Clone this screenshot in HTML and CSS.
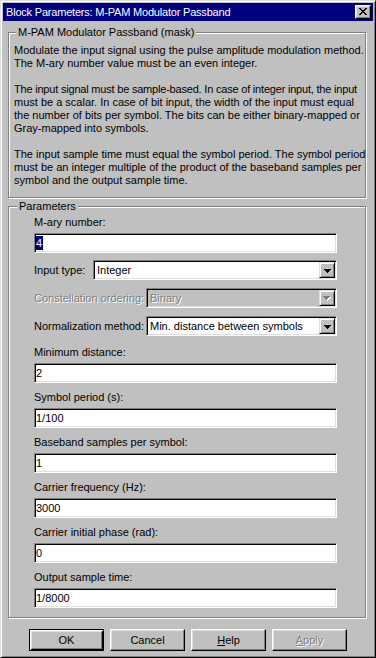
FILE: index.html
```html
<!DOCTYPE html>
<html lang="en">
<head>
    <meta charset="UTF-8">
    <meta name="viewport" content="width=device-width, initial-scale=1.0">
    <title>Block Parameters: M-PAM Modulator Passband</title>
    <link rel="stylesheet" href="styles.css">
</head>
<body>
    <div class="window">
        <!-- Caption -->
        <div class="titlebar">
            <span class="title">Block Parameters: M-PAM Modulator Passband</span>
            <span class="close-btn">
                <svg width="8" height="7" viewBox="0 0 8 7" shape-rendering="crispEdges">
                    <rect x="0" y="0" width="2" height="1"/><rect x="6" y="0" width="2" height="1"/>
                    <rect x="1" y="1" width="2" height="1"/><rect x="5" y="1" width="2" height="1"/>
                    <rect x="2" y="2" width="4" height="1"/>
                    <rect x="3" y="3" width="2" height="1"/>
                    <rect x="2" y="4" width="4" height="1"/>
                    <rect x="1" y="5" width="2" height="1"/><rect x="5" y="5" width="2" height="1"/>
                    <rect x="0" y="6" width="2" height="1"/><rect x="6" y="6" width="2" height="1"/>
                </svg>
            </span>
        </div>

        <div class="dialog">
            <!-- Mask description -->
            <fieldset class="group group-desc">
                <legend>M-PAM Modulator Passband (mask)</legend>
                <p class="desc">Modulate the input signal using the pulse amplitude modulation method.<br>The M-ary number value must be an even integer.</p>
                <p class="desc"><span class="tight">The input signal must be sample-based. In case of integer input, the input</span><br>must be a scalar. In case of bit input, the width of the input must equal<br>the number of bits per symbol. The bits can be either binary-mapped or<br>Gray-mapped into symbols.</p>
                <p class="desc">The input sample time must equal the symbol period. The symbol period<br>must be an integer multiple of the product of the baseband samples per<br>symbol and the output sample time.</p>
            </fieldset>

            <!-- Parameters -->
            <fieldset class="group group-params">
                <legend>Parameters</legend>

                <div class="field field-first">
                    <div class="field-label">M-ary number:</div>
                    <div class="edit"><span class="selected">4</span></div>
                </div>

                <div class="combo-row">
                    <span class="combo-label label-short">Input type:</span>
                    <div class="combo">
                        <span class="combo-text">Integer</span>
                        <span class="drop-btn"><svg width="7" height="4" viewBox="0 0 7 4" shape-rendering="crispEdges"><rect x="0" y="0" width="7" height="1"/><rect x="1" y="1" width="5" height="1"/><rect x="2" y="2" width="3" height="1"/><rect x="3" y="3" width="1" height="1"/></svg></span>
                    </div>
                </div>

                <div class="combo-row">
                    <span class="combo-label label-long disabled">Constellation ordering:</span>
                    <div class="combo combo-disabled">
                        <span class="combo-text disabled-text">Binary</span>
                        <span class="drop-btn"><svg width="8" height="5" viewBox="0 0 8 5" shape-rendering="crispEdges"><g fill="#fff"><rect x="1" y="1" width="7" height="1"/><rect x="2" y="2" width="5" height="1"/><rect x="3" y="3" width="3" height="1"/><rect x="4" y="4" width="1" height="1"/></g><g fill="#808080"><rect x="0" y="0" width="7" height="1"/><rect x="1" y="1" width="5" height="1"/><rect x="2" y="2" width="3" height="1"/><rect x="3" y="3" width="1" height="1"/></g></svg></span>
                    </div>
                </div>

                <div class="combo-row combo-row-last">
                    <span class="combo-label label-long">Normalization method:</span>
                    <div class="combo">
                        <span class="combo-text">Min. distance between symbols</span>
                        <span class="drop-btn"><svg width="7" height="4" viewBox="0 0 7 4" shape-rendering="crispEdges"><rect x="0" y="0" width="7" height="1"/><rect x="1" y="1" width="5" height="1"/><rect x="2" y="2" width="3" height="1"/><rect x="3" y="3" width="1" height="1"/></svg></span>
                    </div>
                </div>

                <div class="field">
                    <div class="field-label">Minimum distance:</div>
                    <div class="edit">2</div>
                </div>

                <div class="field">
                    <div class="field-label">Symbol period (s):</div>
                    <div class="edit">1/100</div>
                </div>

                <div class="field">
                    <div class="field-label">Baseband samples per symbol:</div>
                    <div class="edit">1</div>
                </div>

                <div class="field">
                    <div class="field-label">Carrier frequency (Hz):</div>
                    <div class="edit">3000</div>
                </div>

                <div class="field">
                    <div class="field-label">Carrier initial phase (rad):</div>
                    <div class="edit">0</div>
                </div>

                <div class="field field-last">
                    <div class="field-label">Output sample time:</div>
                    <div class="edit">1/8000</div>
                </div>
            </fieldset>

            <!-- Buttons -->
            <div class="buttons">
                <span class="btn btn-default">OK</span>
                <span class="btn">Cancel</span>
                <span class="btn"><u>H</u>elp</span>
                <span class="btn btn-disabled"><u>A</u>pply</span>
            </div>
        </div>
    </div>
</body>
</html>
```

FILE: styles.css
```css
:root {
    --face: #c0c0c0;
    --light: #dfdfdf;
    --shadow: #808080;
    --caption: #000080;
}

* {
    margin: 0;
    padding: 0;
    box-sizing: border-box;
}

body {
    margin: 0;
    background-color: var(--face);
    font-family: 'Liberation Sans', Arial, sans-serif;
    font-size: 11px;
    line-height: 13px;
    color: #000;
}

.window {
    width: 376px;
    height: 658px;
    padding: 2px;
    background-color: var(--face);
    border: 1px solid;
    border-color: var(--light) #000 #000 var(--light);
    box-shadow: inset 1px 1px #fff, inset -1px -1px var(--shadow);
}

.titlebar {
    display: flex;
    align-items: center;
    height: 18px;
    padding: 0 2px 0 3px;
    background-color: var(--caption);
    color: #fff;
}

.title {
    font-size: 11px;
    letter-spacing: -0.2px;
}

.close-btn {
    display: flex;
    align-items: center;
    justify-content: center;
    width: 16px;
    height: 14px;
    margin-left: auto;
    padding: 0 1px 1px 0;
    background-color: var(--face);
    border: 1px solid;
    border-color: #fff #000 #000 #fff;
    box-shadow: inset -1px -1px var(--shadow), inset 1px 1px var(--light);
}

.dialog {
    padding: 0 7px 0 5px;
}

.group {
    border: 1px solid var(--shadow);
    box-shadow: 1px 1px 0 #fff, inset 1px 1px 0 #fff;
    min-width: 0;
}

.group legend {
    margin-left: 2px;
    padding: 0 2px;
    background-color: var(--face);
    line-height: 13px;
}

.group-desc {
    margin-top: 5px;
    padding: 5px 5px 10px 5px;
}

.desc {
    white-space: nowrap;
    margin-bottom: 13px;
}

.desc:last-child {
    margin-bottom: 0;
}

/* long line needs to stay inside the frame */
.tight {
    letter-spacing: -0.2px;
}

.group-params {
    margin-top: 2px;
    padding: 3px 28px 9px 25px;
}

.group-params legend {
    margin-left: -17px;
}

.field {
    margin-bottom: 8px;
}

.field-first {
    margin-bottom: 7px;
}

.field-last {
    margin-bottom: 0;
}

.field-label {
    margin-bottom: 4px;
}

.edit {
    height: 20px;
    padding: 2px 2px 0 1px;
    background-color: #fff;
    border: 1px solid;
    border-color: var(--shadow) #fff #fff var(--shadow);
    box-shadow: inset 1px 1px #000, inset -1px -1px var(--light);
    white-space: nowrap;
    line-height: 14px;
}

.selected {
    display: inline-block;
    background-color: var(--caption);
    color: #fff;
    padding: 0 1px 0 0;
}

.combo-row {
    display: flex;
    align-items: center;
    margin-bottom: 8px;
}

.combo-row-last {
    margin-bottom: 10px;
}

.combo-label {
    flex-shrink: 0;
}

.label-short {
    width: 59px;
}

.label-long {
    width: 112px;
}

.disabled,
.disabled-text {
    color: var(--shadow);
    text-shadow: 1px 1px 0 #fff;
}

.combo {
    flex: 1;
    display: flex;
    align-items: center;
    height: 20px;
    padding: 1px;
    background-color: #fff;
    border: 1px solid;
    border-color: var(--shadow) #fff #fff var(--shadow);
    box-shadow: inset 1px 1px #000, inset -1px -1px var(--light);
}

.combo-disabled {
    background-color: var(--face);
}

.combo-text {
    flex: 1;
    padding-left: 2px;
    white-space: nowrap;
}

.drop-btn {
    display: flex;
    align-items: center;
    justify-content: center;
    width: 16px;
    height: 16px;
    padding-top: 1px;
    background-color: var(--face);
    border: 1px solid;
    border-color: var(--light) #000 #000 var(--light);
    box-shadow: inset 1px 1px #fff, inset -1px -1px var(--shadow);
}

.buttons {
    display: flex;
    gap: 6px;
    margin: 11px 0 0 21px;
}

.btn {
    display: flex;
    align-items: center;
    justify-content: center;
    width: 75px;
    height: 22px;
    background-color: var(--face);
    border: 1px solid;
    border-color: #fff #000 #000 #fff;
    box-shadow: inset -1px -1px var(--shadow), inset 1px 1px var(--light);
}

.btn-default {
    border-color: #000;
    box-shadow: inset 1px 1px #fff, inset -1px -1px #000, inset 2px 2px var(--light), inset -2px -2px var(--shadow);
}

.btn-disabled {
    color: var(--shadow);
    text-shadow: 1px 1px 0 #fff;
}
```
